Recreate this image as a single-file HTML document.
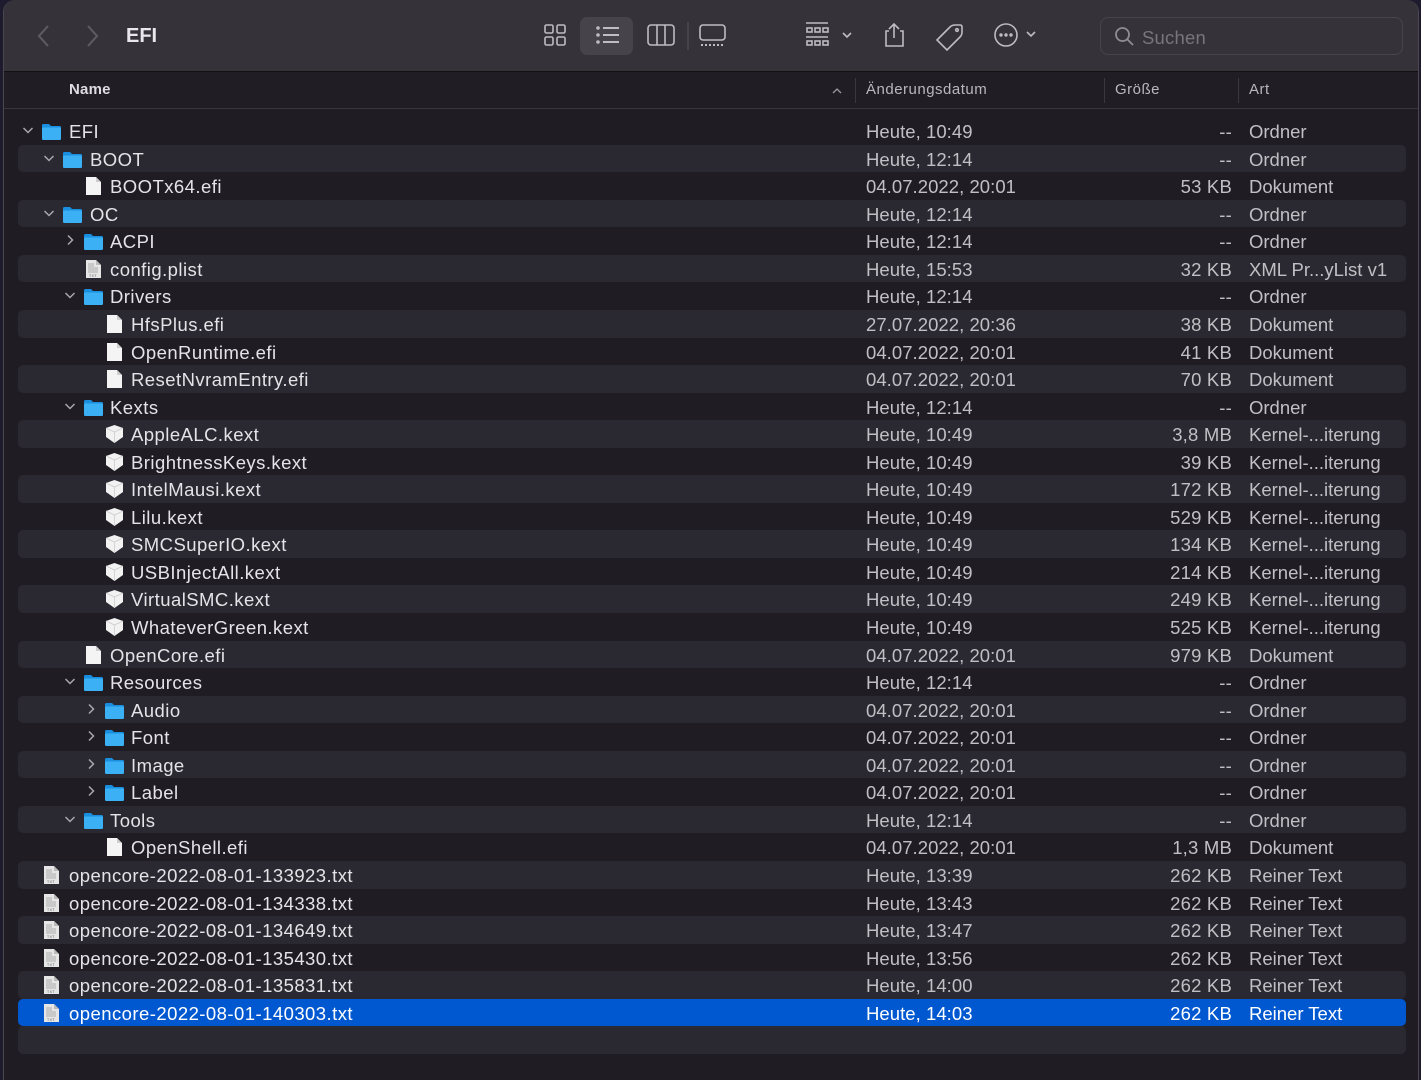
<!DOCTYPE html>
<html><head><meta charset="utf-8"><style>
*{margin:0;padding:0;box-sizing:border-box}
body{width:1421px;height:1080px;background:#1e1b2e;overflow:hidden;font-family:"Liberation Sans",sans-serif;position:relative}
#win{position:absolute;left:3px;top:0;width:1416px;height:1080px;background:#1f1d23;border-left:1px solid #4a484e;border-right:1px solid #4a484e;border-radius:12px 12px 0 0;overflow:hidden}
#tb{position:absolute;left:0;top:0;right:0;height:72px;background:#353339;border-bottom:1px solid #111}
#hd{position:absolute;left:0;top:72px;right:0;height:37px;background:#201e24;border-bottom:1px solid #38363c;color:#b8b7bc;font-size:15px;letter-spacing:0.5px}
#hd span{position:absolute;top:9px}
.sep{position:absolute;top:6px;width:1px;height:25px;background:#3a383e}
#rows{position:absolute;left:0;top:117.2px;right:0}
.r{position:relative;height:27.56px;font-size:18.5px;letter-spacing:0.45px;color:#e4e3e7;margin:0 12px 0 14px;border-radius:5px}
.s{background:#2a2830}
.sel{background:#0058d0}
.sel .d,.sel .z,.sel .k{color:#fff}
.r>*{position:absolute;top:4px;white-space:nowrap}
.d{left:848px;color:#c0bfc4;letter-spacing:0.05px}
.z{right:174px;color:#c0bfc4;letter-spacing:0.2px}
.k{left:1231px;color:#c0bfc4;letter-spacing:0}
.ic{top:4px;width:21px;height:20px}
.ch{top:7px;width:12px;height:12px}
</style></head><body>
<svg width="0" height="0" style="position:absolute">
<defs>
<symbol id="fo" viewBox="0 0 21 20"><path d="M1 4.5Q1 3 2.5 3H8l2 2h8.5Q20 5 20 6.5V17.5Q20 19 18.5 19H2.5Q1 19 1 17.5Z" fill="#1a8fe0"/><path d="M1 7.5Q1 6.5 2 6.5H19Q20 6.5 20 7.5V17.5Q20 19 18.5 19H2.5Q1 19 1 17.5Z" fill="#3cb0f5"/></symbol>
<symbol id="dc" viewBox="0 0 21 20"><path d="M3 1H13L18 6V19H3Z" fill="#f4f4f4"/><path d="M13 1V6H18" fill="#cfcfcf"/></symbol>
<symbol id="tx" viewBox="0 0 21 20"><path d="M3 1H13L18 6V19H3Z" fill="#e6e6e6"/><path d="M13 1V6H18" fill="#bbb"/><path d="M5 5h6M5 7h6M5 9h10M5 11h10M5 13h10" stroke="#999" stroke-width="0.8"/><text x="6" y="18" font-size="3.5" fill="#555" font-family="Liberation Sans">TXT</text></symbol>
<symbol id="kx" viewBox="0 0 21 20"><path d="M10.5 1L19 4V13L10.5 19L2 13V4Z" fill="#f2f2f2"/><path d="M2 4L10.5 8L19 4M10.5 8V19" stroke="#ccc" stroke-width="0.8" fill="none"/></symbol>
<symbol id="cd" viewBox="0 0 12 12"><path d="M1.5 4L6 8.5L10.5 4" stroke="#a8a7ac" stroke-width="1.5" fill="none"/></symbol>
<symbol id="cr" viewBox="0 0 12 12"><path d="M4 1.5L8.5 6L4 10.5" stroke="#a8a7ac" stroke-width="1.5" fill="none"/></symbol>
</defs></svg>
<div id="win">
<div id="tb">
<svg style="position:absolute;left:30px;top:24px" width="20" height="24"><path d="M14 2L5 12L14 22" stroke="#5f5d63" stroke-width="2" fill="none"/></svg>
<svg style="position:absolute;left:78px;top:24px" width="20" height="24"><path d="M6 2L15 12L6 22" stroke="#5f5d63" stroke-width="2" fill="none"/></svg>
<div style="position:absolute;left:122px;top:25px;font-size:20px;font-weight:bold;color:#e8e7eb">EFI</div>
<div style="position:absolute;left:576px;top:17px;width:53px;height:38px;background:#46444a;border-radius:7px"></div>
<svg style="position:absolute;left:530px;top:20px" width="500" height="34" fill="none" stroke="#bdbcc1" stroke-width="1.6">
<rect x="11" y="5" width="8" height="8" rx="1.5"/><rect x="23" y="5" width="8" height="8" rx="1.5"/><rect x="11" y="17" width="8" height="8" rx="1.5"/><rect x="23" y="17" width="8" height="8" rx="1.5"/>
<circle cx="64" cy="8" r="1" fill="#ddd"/><circle cx="64" cy="15" r="1" fill="#ddd"/><circle cx="64" cy="22" r="1" fill="#ddd"/><path d="M69 8H85M69 15H85M69 22H85" stroke="#e6e5ea"/>
<rect x="114" y="5" width="26" height="20" rx="3"/><path d="M123 5V25M131 5V25"/>
<path d="M154 2V30" stroke="#4a484e"/>
<rect x="166" y="5" width="25" height="15" rx="3"/><path d="M167 25h2M171 25h2M175 25h2M179 25h2M183 25h2M187 25h2" stroke-width="2"/>
<path d="M272 3H294M272 17H294"/><rect x="273" y="8" width="5" height="4"/><rect x="281" y="8" width="5" height="4"/><rect x="289" y="8" width="5" height="4"/><rect x="273" y="21" width="5" height="4"/><rect x="281" y="21" width="5" height="4"/><rect x="289" y="21" width="5" height="4"/>
<path d="M309 13L313 17L317 13"/>
<path d="M355 11h-3v15h17V11h-3M360 4V18M355 9L360 4L365 9"/>
<path d="M403 20L416 7Q418 5 421 5H426Q428 5 428 7V12Q428 15 426 17L413 30Z"/><circle cx="423" cy="10" r="1.3"/>
<circle cx="472" cy="15" r="11"/><circle cx="467" cy="15" r="0.9" fill="#ddd"/><circle cx="472" cy="15" r="0.9" fill="#ddd"/><circle cx="477" cy="15" r="0.9" fill="#ddd"/>
</svg>
<svg style="position:absolute;left:1021px;top:30px" width="12" height="10"><path d="M2 2L6 6L10 2" stroke="#bdbcc1" stroke-width="1.6" fill="none"/></svg>
<div style="position:absolute;left:1096px;top:17px;width:303px;height:38px;border:1px solid #47454b;border-radius:8px"></div>
<svg style="position:absolute;left:1110px;top:26px" width="22" height="22"><circle cx="8.5" cy="8.5" r="6.5" stroke="#8e8d92" stroke-width="1.8" fill="none"/><path d="M13 13L19 19" stroke="#8e8d92" stroke-width="1.8"/></svg>
<div style="position:absolute;left:1138px;top:27px;font-size:18.5px;letter-spacing:0.2px;color:#78767c">Suchen</div>
</div>
<div id="hd">
<span style="left:65px;font-weight:bold;color:#dddce0;letter-spacing:0.2px">Name</span>
<svg style="position:absolute;left:827px;top:14px" width="12" height="10"><path d="M2 7L6 3L10 7" stroke="#9a999e" stroke-width="1.3" fill="none"/></svg>
<div class="sep" style="left:851px"></div>
<span style="left:862px">Änderungsdatum</span>
<div class="sep" style="left:1100px"></div>
<span style="left:1111px">Größe</span>
<div class="sep" style="left:1234px"></div>
<span style="left:1245px">Art</span>
</div>
<div id="rows">
<div class="r"><svg class="ch" style="left:4px"><use href="#cd"/></svg><svg class="ic" style="left:23px"><use href="#fo"/></svg><span style="left:51px">EFI</span><span class="d">Heute, 10:49</span><span class="z">--</span><span class="k">Ordner</span></div>
<div class="r s"><svg class="ch" style="left:25px"><use href="#cd"/></svg><svg class="ic" style="left:44px"><use href="#fo"/></svg><span style="left:72px">BOOT</span><span class="d">Heute, 12:14</span><span class="z">--</span><span class="k">Ordner</span></div>
<div class="r"><svg class="ic" style="left:65px"><use href="#dc"/></svg><span style="left:92px">BOOTx64.efi</span><span class="d">04.07.2022, 20:01</span><span class="z">53 KB</span><span class="k">Dokument</span></div>
<div class="r s"><svg class="ch" style="left:25px"><use href="#cd"/></svg><svg class="ic" style="left:44px"><use href="#fo"/></svg><span style="left:72px">OC</span><span class="d">Heute, 12:14</span><span class="z">--</span><span class="k">Ordner</span></div>
<div class="r"><svg class="ch" style="left:46px"><use href="#cr"/></svg><svg class="ic" style="left:65px"><use href="#fo"/></svg><span style="left:92px">ACPI</span><span class="d">Heute, 12:14</span><span class="z">--</span><span class="k">Ordner</span></div>
<div class="r s"><svg class="ic" style="left:65px"><use href="#tx"/></svg><span style="left:92px">config.plist</span><span class="d">Heute, 15:53</span><span class="z">32 KB</span><span class="k">XML Pr...yList v1</span></div>
<div class="r"><svg class="ch" style="left:46px"><use href="#cd"/></svg><svg class="ic" style="left:65px"><use href="#fo"/></svg><span style="left:92px">Drivers</span><span class="d">Heute, 12:14</span><span class="z">--</span><span class="k">Ordner</span></div>
<div class="r s"><svg class="ic" style="left:86px"><use href="#dc"/></svg><span style="left:113px">HfsPlus.efi</span><span class="d">27.07.2022, 20:36</span><span class="z">38 KB</span><span class="k">Dokument</span></div>
<div class="r"><svg class="ic" style="left:86px"><use href="#dc"/></svg><span style="left:113px">OpenRuntime.efi</span><span class="d">04.07.2022, 20:01</span><span class="z">41 KB</span><span class="k">Dokument</span></div>
<div class="r s"><svg class="ic" style="left:86px"><use href="#dc"/></svg><span style="left:113px">ResetNvramEntry.efi</span><span class="d">04.07.2022, 20:01</span><span class="z">70 KB</span><span class="k">Dokument</span></div>
<div class="r"><svg class="ch" style="left:46px"><use href="#cd"/></svg><svg class="ic" style="left:65px"><use href="#fo"/></svg><span style="left:92px">Kexts</span><span class="d">Heute, 12:14</span><span class="z">--</span><span class="k">Ordner</span></div>
<div class="r s"><svg class="ic" style="left:86px"><use href="#kx"/></svg><span style="left:113px">AppleALC.kext</span><span class="d">Heute, 10:49</span><span class="z">3,8 MB</span><span class="k">Kernel-...iterung</span></div>
<div class="r"><svg class="ic" style="left:86px"><use href="#kx"/></svg><span style="left:113px">BrightnessKeys.kext</span><span class="d">Heute, 10:49</span><span class="z">39 KB</span><span class="k">Kernel-...iterung</span></div>
<div class="r s"><svg class="ic" style="left:86px"><use href="#kx"/></svg><span style="left:113px">IntelMausi.kext</span><span class="d">Heute, 10:49</span><span class="z">172 KB</span><span class="k">Kernel-...iterung</span></div>
<div class="r"><svg class="ic" style="left:86px"><use href="#kx"/></svg><span style="left:113px">Lilu.kext</span><span class="d">Heute, 10:49</span><span class="z">529 KB</span><span class="k">Kernel-...iterung</span></div>
<div class="r s"><svg class="ic" style="left:86px"><use href="#kx"/></svg><span style="left:113px">SMCSuperIO.kext</span><span class="d">Heute, 10:49</span><span class="z">134 KB</span><span class="k">Kernel-...iterung</span></div>
<div class="r"><svg class="ic" style="left:86px"><use href="#kx"/></svg><span style="left:113px">USBInjectAll.kext</span><span class="d">Heute, 10:49</span><span class="z">214 KB</span><span class="k">Kernel-...iterung</span></div>
<div class="r s"><svg class="ic" style="left:86px"><use href="#kx"/></svg><span style="left:113px">VirtualSMC.kext</span><span class="d">Heute, 10:49</span><span class="z">249 KB</span><span class="k">Kernel-...iterung</span></div>
<div class="r"><svg class="ic" style="left:86px"><use href="#kx"/></svg><span style="left:113px">WhateverGreen.kext</span><span class="d">Heute, 10:49</span><span class="z">525 KB</span><span class="k">Kernel-...iterung</span></div>
<div class="r s"><svg class="ic" style="left:65px"><use href="#dc"/></svg><span style="left:92px">OpenCore.efi</span><span class="d">04.07.2022, 20:01</span><span class="z">979 KB</span><span class="k">Dokument</span></div>
<div class="r"><svg class="ch" style="left:46px"><use href="#cd"/></svg><svg class="ic" style="left:65px"><use href="#fo"/></svg><span style="left:92px">Resources</span><span class="d">Heute, 12:14</span><span class="z">--</span><span class="k">Ordner</span></div>
<div class="r s"><svg class="ch" style="left:67px"><use href="#cr"/></svg><svg class="ic" style="left:86px"><use href="#fo"/></svg><span style="left:113px">Audio</span><span class="d">04.07.2022, 20:01</span><span class="z">--</span><span class="k">Ordner</span></div>
<div class="r"><svg class="ch" style="left:67px"><use href="#cr"/></svg><svg class="ic" style="left:86px"><use href="#fo"/></svg><span style="left:113px">Font</span><span class="d">04.07.2022, 20:01</span><span class="z">--</span><span class="k">Ordner</span></div>
<div class="r s"><svg class="ch" style="left:67px"><use href="#cr"/></svg><svg class="ic" style="left:86px"><use href="#fo"/></svg><span style="left:113px">Image</span><span class="d">04.07.2022, 20:01</span><span class="z">--</span><span class="k">Ordner</span></div>
<div class="r"><svg class="ch" style="left:67px"><use href="#cr"/></svg><svg class="ic" style="left:86px"><use href="#fo"/></svg><span style="left:113px">Label</span><span class="d">04.07.2022, 20:01</span><span class="z">--</span><span class="k">Ordner</span></div>
<div class="r s"><svg class="ch" style="left:46px"><use href="#cd"/></svg><svg class="ic" style="left:65px"><use href="#fo"/></svg><span style="left:92px">Tools</span><span class="d">Heute, 12:14</span><span class="z">--</span><span class="k">Ordner</span></div>
<div class="r"><svg class="ic" style="left:86px"><use href="#dc"/></svg><span style="left:113px">OpenShell.efi</span><span class="d">04.07.2022, 20:01</span><span class="z">1,3 MB</span><span class="k">Dokument</span></div>
<div class="r s"><svg class="ic" style="left:23px"><use href="#tx"/></svg><span style="left:51px">opencore-2022-08-01-133923.txt</span><span class="d">Heute, 13:39</span><span class="z">262 KB</span><span class="k">Reiner Text</span></div>
<div class="r"><svg class="ic" style="left:23px"><use href="#tx"/></svg><span style="left:51px">opencore-2022-08-01-134338.txt</span><span class="d">Heute, 13:43</span><span class="z">262 KB</span><span class="k">Reiner Text</span></div>
<div class="r s"><svg class="ic" style="left:23px"><use href="#tx"/></svg><span style="left:51px">opencore-2022-08-01-134649.txt</span><span class="d">Heute, 13:47</span><span class="z">262 KB</span><span class="k">Reiner Text</span></div>
<div class="r"><svg class="ic" style="left:23px"><use href="#tx"/></svg><span style="left:51px">opencore-2022-08-01-135430.txt</span><span class="d">Heute, 13:56</span><span class="z">262 KB</span><span class="k">Reiner Text</span></div>
<div class="r s"><svg class="ic" style="left:23px"><use href="#tx"/></svg><span style="left:51px">opencore-2022-08-01-135831.txt</span><span class="d">Heute, 14:00</span><span class="z">262 KB</span><span class="k">Reiner Text</span></div>
<div class="r sel"><svg class="ic" style="left:23px"><use href="#tx"/></svg><span style="left:51px;color:#fff">opencore-2022-08-01-140303.txt</span><span class="d">Heute, 14:03</span><span class="z">262 KB</span><span class="k">Reiner Text</span></div>
<div class="r s"></div>
</div>
</div>
</body></html>
